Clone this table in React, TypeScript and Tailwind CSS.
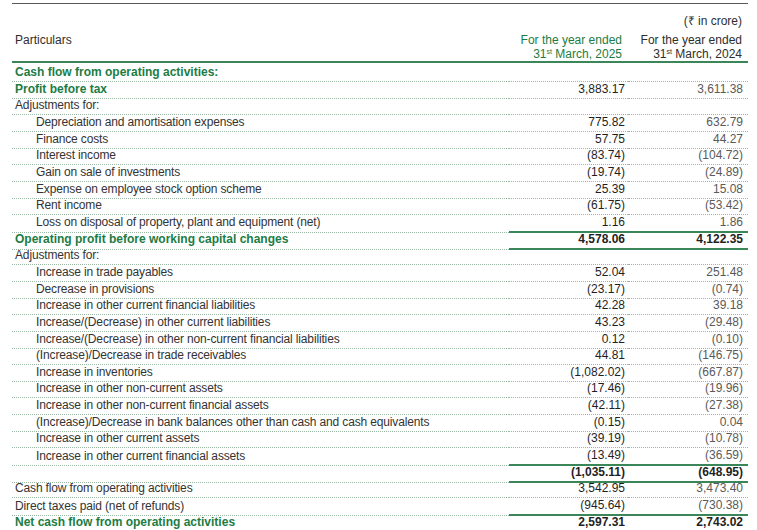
type Row = {
  label: string;
  head?: boolean;
  indent?: boolean;
  total?: boolean;
  a?: string;
  b?: string;
};

const rows: Row[] = [
  { label: "Cash flow from operating activities:", head: true },
  { label: "Profit before tax", head: true, a: "3,883.17", b: "3,611.38" },
  { label: "Adjustments for:" },
  { label: "Depreciation and amortisation expenses", indent: true, a: "775.82", b: "632.79" },
  { label: "Finance costs", indent: true, a: "57.75", b: "44.27" },
  { label: "Interest income", indent: true, a: "(83.74)", b: "(104.72)" },
  { label: "Gain on sale of investments", indent: true, a: "(19.74)", b: "(24.89)" },
  { label: "Expense on employee stock option scheme", indent: true, a: "25.39", b: "15.08" },
  { label: "Rent income", indent: true, a: "(61.75)", b: "(53.42)" },
  { label: "Loss on disposal of property, plant and equipment (net)", indent: true, a: "1.16", b: "1.86" },
  { label: "Operating profit before working capital changes", head: true, total: true, a: "4,578.06", b: "4,122.35" },
  { label: "Adjustments for:" },
  { label: "Increase in trade payables", indent: true, a: "52.04", b: "251.48" },
  { label: "Decrease in provisions", indent: true, a: "(23.17)", b: "(0.74)" },
  { label: "Increase in other current financial liabilities", indent: true, a: "42.28", b: "39.18" },
  { label: "Increase/(Decrease) in other current liabilities", indent: true, a: "43.23", b: "(29.48)" },
  { label: "Increase/(Decrease) in other non-current financial liabilities", indent: true, a: "0.12", b: "(0.10)" },
  { label: "(Increase)/Decrease in trade receivables", indent: true, a: "44.81", b: "(146.75)" },
  { label: "Increase in inventories", indent: true, a: "(1,082.02)", b: "(667.87)" },
  { label: "Increase in other non-current assets", indent: true, a: "(17.46)", b: "(19.96)" },
  { label: "Increase in other non-current financial assets", indent: true, a: "(42.11)", b: "(27.38)" },
  { label: "(Increase)/Decrease in bank balances other than cash and cash equivalents", indent: true, a: "(0.15)", b: "0.04" },
  { label: "Increase in other current assets", indent: true, a: "(39.19)", b: "(10.78)" },
  { label: "Increase in other current financial assets", indent: true, a: "(13.49)", b: "(36.59)" },
  { label: "", total: true, a: "(1,035.11)", b: "(648.95)" },
  { label: "Cash flow from operating activities", a: "3,542.95", b: "3,473.40" },
  { label: "Direct taxes paid (net of refunds)", a: "(945.64)", b: "(730.38)" },
  { label: "Net cash flow from operating activities", head: true, total: true, a: "2,597.31", b: "2,743.02" },
];

function YearHead({ year, green }: { year: string; green?: boolean }) {
  return (
    <div className={green ? "text-right text-[#1c7c44] pr-[6px]" : "text-right text-[#2e2e2e] pr-[6px]"}>
      <div className="h-[14px] leading-[14px]">For the year ended</div>
      <div className="h-[14px] leading-[14px]">
        31<span className="relative top-[-4px] text-[7px] leading-none">st</span> March, {year}
      </div>
    </div>
  );
}

export default function App() {
  return (
    <div className="bg-white w-[757px] h-[530px] overflow-hidden pl-[12px] text-[12px] font-['Liberation_Sans',Arial,sans-serif]">
      <div className="w-[736px] mt-[3px] border-t border-[#5a5a5a]">
        <div className="border-b-2 border-[#3a8659] h-[59px] pt-[10px]">
          <div className="text-right pr-[6px] leading-[15px] text-[#2e2e2e]">(₹ in crore)</div>
          <div className="grid grid-cols-[497px_119px_120px] mt-[4px]">
            <div className="pl-[3px] leading-[14px] text-[#2e2e2e]">Particulars</div>
            <YearHead year="2025" green />
            <YearHead year="2024" />
          </div>
        </div>
        {rows.map((r, i) => {
          const solid = r.total || rows[i + 1]?.total;
          const numBorder = solid
            ? "border-b-2 border-solid border-[#3a8659]"
            : "border-b border-dotted border-[#9bb8a5]";
          const bold = r.total ? "font-bold" : "";
          return (
            <div key={i} className="grid grid-cols-[497px_119px_120px] h-[16.67px]">
              <div
                className={
                  "flex items-center border-b border-dotted border-[#9bb8a5] whitespace-nowrap " +
                  (r.indent ? "pl-[24px] " : "pl-[3px] ") +
                  (r.head ? "font-bold text-[#1c7c44]" : "text-[#333333] tracking-[-0.15px]")
                }
              >
                {r.label}
              </div>
              <div className={"flex items-center justify-end pr-[3px] text-[#1f1f1f] " + numBorder + " " + bold}>
                {r.a}
              </div>
              <div
                className={
                  "flex items-center justify-end pr-[5px] " +
                  numBorder +
                  " " +
                  (r.total ? "font-bold text-[#1f1f1f]" : "text-[#5a5a5a]")
                }
              >
                {r.b}
              </div>
            </div>
          );
        })}
      </div>
    </div>
  );
}
